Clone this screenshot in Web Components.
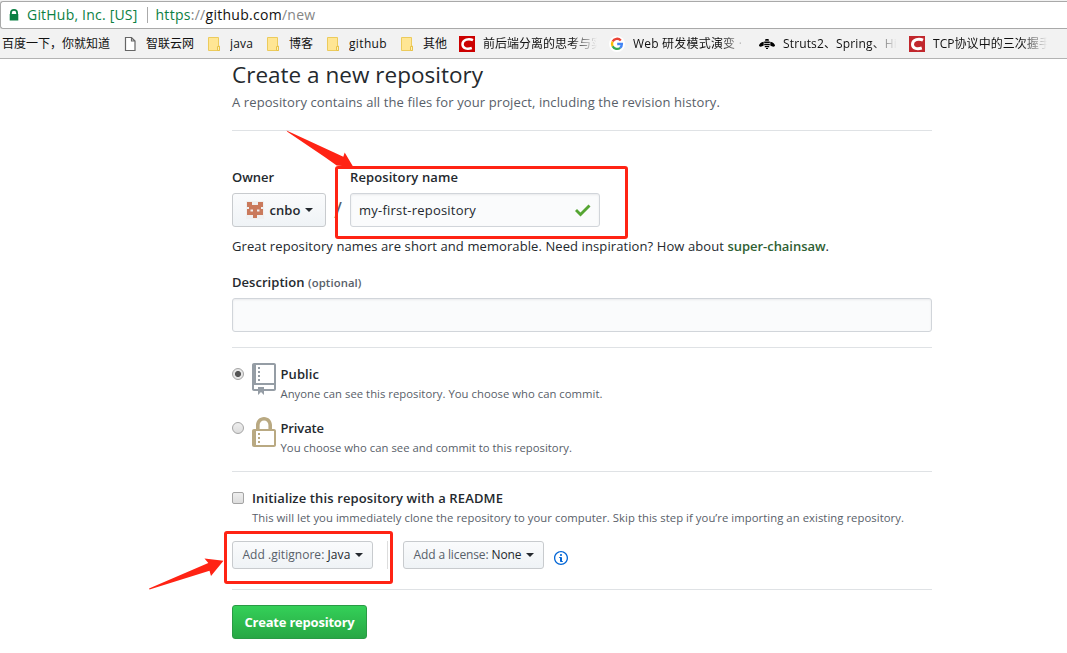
<!DOCTYPE html>
<html lang="en"><head><meta charset="utf-8"><title>Create a new repository</title>
<style>html,body{margin:0;background:#fff}body{width:1067px;height:653px;overflow:hidden}</style>
</head><body>
<repo-page></repo-page>
<script>
const define=(name,html,init)=>customElements.define(name,class extends HTMLElement{
  constructor(){super();const t=document.createElement('template');t.innerHTML=html;
    this.attachShadow({mode:'open'}).append(t.content.cloneNode(true));}
  connectedCallback(){if(init)init.call(this,this.shadowRoot);}
});

/* Text run whose tracking is tuned to the width in its "w" attribute. */
define('ui-text',`<style>:host{display:inline-block;white-space:pre;flex:none}span{display:inline-block}</style><span><slot></slot></span>`,
function(root){
  const w=parseFloat(this.getAttribute('w'));if(!w)return;
  const s=root.querySelector('span'),n=[...this.textContent].length;
  s.style.letterSpacing='0px';
  const d=(w-s.getBoundingClientRect().width)/n;
  s.style.letterSpacing=d.toFixed(3)+'px';
  this.style.width=w+'px';
});

define('address-bar',`<style>
:host{display:block;height:29px;padding-top:1px;background:#f2f2f2;box-sizing:border-box}
div{height:28px;box-sizing:border-box;border:1px solid #a9a9a9;border-right:0;border-radius:3px 0 0 3px;background:#fff;display:flex;align-items:center;padding-left:8px;font:14px/24px "Open Sans",sans-serif;color:#0b8043}
svg{margin-right:8px;flex:none}i{width:1px;height:16px;background:#aaa;margin:0 8px 0 9px}b{font-weight:400;color:#111}em{font-style:normal;color:#858585}
</style><div><svg width="10" height="12" viewBox="0 0 10 12"><path d="M1 5V4a4 4 0 0 1 8 0v1h.3v6.5H.7V5zm1.8 0h4.4V4a2.2 2.2 0 0 0-4.400 0z" fill="#0b8043"/></svg><ui-text w="110.5">GitHub, Inc. [US]</ui-text><i></i><ui-text w="160">https<em>://</em><b>github.com</b><em>/new</em></ui-text></div>`);

const icons={
 doc:'<path d="M3.5 1.5h6l3.500 3.500v9.500h-9.500zM9.500 1.500v3.500h3.500" fill="#fff" stroke="#666" stroke-width="1.2"/>',
 folder:'<path d="M2.500 1.500h10V10h1v4.500h-11z" fill="#ffe694" stroke="#eccb5c"/><path d="M11.500 14.500v-4h2v4z" fill="#fff0b5" stroke="#e7c24b"/>',
 c:'<path fill="#c00" d="M0 0h16v16H0z"/><path d="M14 4.200C10 2.200 3.600 3.300 3.500 8.300c0 4.500 5 5 9.300 3.700" fill="none" stroke="#fff" stroke-width="2.5"/>',
 c2:'<path fill="#c1272d" d="M0 0h16v16H0z"/><path d="M14 4.200C10 2.200 3.600 3.300 3.500 8.300c0 4.500 5 5 9.300 3.700" fill="none" stroke="#fff" stroke-width="3"/>',
 g:'<circle cx="8" cy="8" r="8" fill="#fff"/><g fill="none" stroke-width="2.300"><path d="M11.800 4.400A5 5 0 0 0 3.600 5.600" stroke="#ea4335"/><path d="M3.600 5.600a5 5 0 0 0 0 4.700" stroke="#fbbc05"/><path d="M3.600 10.300a5 5 0 0 0 7.600 1.500" stroke="#34a853"/><path d="M11.200 11.800A5 5 0 0 0 12.900 8H8.200" stroke="#4285f4"/></g>',
 bee:'<path d="M6.500 3h3l.5 1.700H6zM5.200 5.500h5.600v1.400H5.200zM5.200 7.800h5.600v1.400H5.200zM5.800 10h4.400v1.300H5.800zM7 12h2v1H7z"/><path d="M4.700 5.700C2 6 0 8 0 9.600c0 1.600 3 1.400 4.700 0zM11.300 5.700C14 6 16 8 16 9.600c0 1.600-3 1.400-4.700 0z"/>'
};
define('book-mark',`<style>
:host{display:flex;align-items:center;gap:8px;flex:none}svg{flex:none}
:host([fade]) div{-webkit-mask-image:linear-gradient(90deg,#000 calc(100% - 26px),transparent);mask-image:linear-gradient(90deg,#000 calc(100% - 26px),transparent)}
div{overflow:hidden;white-space:pre;padding-top:1px}
</style><svg width="16" height="16" viewBox="0 0 16 16"></svg><div><slot></slot></div>`,
function(root){const k=this.getAttribute('icon'),s=root.querySelector('svg');if(k)s.innerHTML=icons[k];else s.remove();
  const c=this.getAttribute('clip');if(c)root.querySelector('div').style.width=c+'px';});

define('bookmark-bar',`<style>
:host{display:flex;gap:12px;height:30px;box-sizing:border-box;border-bottom:1px solid #b3b3b3;background:#f2f2f2;padding-left:2px;font:12px/22px "Open Sans","Noto Sans CJK SC",sans-serif;color:#111;overflow:hidden}
</style>
<book-mark><ui-text w="108">百度一下，你就知道</ui-text></book-mark>
<book-mark icon="doc"><ui-text w="48">智联云网</ui-text></book-mark>
<book-mark icon="folder"><ui-text w="23">java</ui-text></book-mark>
<book-mark icon="folder"><ui-text w="24">博客</ui-text></book-mark>
<book-mark icon="folder"><ui-text w="38">github</ui-text></book-mark>
<book-mark icon="folder"><ui-text w="24">其他</ui-text></book-mark>
<book-mark icon="c" fade clip="114"><ui-text w="120">前后端分离的思考与实</ui-text></book-mark>
<book-mark icon="g" fade clip="114"><ui-text w="109">Web 研发模式演变 ·</ui-text></book-mark>
<book-mark icon="bee" fade clip="114"><ui-text w="114">Struts2、Spring、Hi</ui-text></book-mark>
<book-mark icon="c2" fade clip="114"><ui-text w="118">TCP协议中的三次握手</ui-text></book-mark>`);

define('drop-button',`<style>
:host{display:flex;box-sizing:border-box;align-items:center;justify-content:center;border:1px solid #c8cbce;border-radius:3px;background:linear-gradient(#fafbfc,#eff3f6);color:#24292e;flex:none}
i{border:4px solid transparent;border-top-color:#24292e;border-bottom:0;margin-left:4px}
</style><slot></slot><i></i>`);

define('form-input',`<style>
:host{display:flex;box-sizing:border-box;height:34px;align-items:center;justify-content:space-between;padding:0 8px;border:1px solid #d1d5da;border-radius:3px;background:#fafbfc;box-shadow:inset 0 1px 2px rgba(27,31,35,.075)}
</style><slot></slot>`);

define('radio-dot',`<style>
:host{display:block;box-sizing:border-box;width:12px;height:12px;border:1px solid #a4a4a4;border-radius:50%;background:linear-gradient(#eee,#ddd);flex:none}
:host([square]){border-radius:2px}
:host([checked]){background:radial-gradient(circle,#555 0 2.700px,#e6e6e6 3.300px)}
</style>`);

define('choice-row',`<style>
:host{display:flex;height:54px;align-items:flex-start}
radio-dot{margin:4px 8px 0 0}.ic{width:24px;height:32px;flex:none;margin:-1px 4.500px 0 0}
.t{display:flex;flex-direction:column}
</style><radio-dot></radio-dot><div class="ic"><slot name="icon"></slot></div><div class="t"><slot></slot></div>`,
function(root){if(this.hasAttribute('checked'))root.querySelector('radio-dot').setAttribute('checked','');});

define('red-arrows',`<style>:host{position:absolute;inset:0;pointer-events:none}</style>
<svg width="1067" height="653" viewBox="0 0 1067 653" fill="#ff2314"><path d="M286.500 130.500L343.300 156.700l1.400-4.200 8.600 14.500-16.600-1.500-12-8.500-37-25zM149 588.500l59.300-25.500-3.800-4.500 19 2.300-12.500 15.200-1.500-5.300-60 18.800z"/>
<g fill="none" stroke="#ff2314" stroke-width="3"><rect x="336.500" y="167.500" width="290" height="70" rx="1.500"/><rect x="225.500" y="532.500" width="166" height="50" rx="1.500"/></g></svg>`);

define('repo-form',`<style>
:host{display:block;width:700px;margin-left:232px;font:13px/20px "Open Sans",sans-serif;color:#24292e}
.row{display:flex}hr{border:0;height:1px;background:#dfe2e5;margin:0}
h1{font:400 22.5px/32px "Open Sans",sans-serif;margin:0;height:33px}
.s{font-weight:600}.m{color:#586069}.sm{font-size:11.300px}
.l{display:block;height:20px}
.slash{width:24px;text-align:center;line-height:34px;color:#586069;font-size:21px}
.go{width:135px;height:34px;box-sizing:border-box;border:1px solid #2a9a45;border-radius:3px;background:linear-gradient(#34d058,#28a745);color:#fff;display:flex;align-items:center;justify-content:center;margin-top:15px}
svg{display:block}
</style>
<h1><ui-text w="251">Create a new repository</ui-text></h1>
<ui-text class="m l" w="488">A repository contains all the files for your project, including the revision history.</ui-text>
<hr style="margin:18px 0 36px">
<div class="row"><ui-text class="s" w="42" style="margin-right:76px">Owner</ui-text><ui-text class="s" w="108">Repository name</ui-text></div>
<div class="row" style="margin-top:6px">
 <drop-button style="width:94px;height:34px"><svg width="18" height="18" viewBox="0 0 18 18" style="margin-right:6px"><path fill="#f0f0f0" d="M0 0h18v18H0z"/><path fill="#ca7a5c" fill-rule="evenodd" d="M1 1h5v3h6V1h5v5h-2v2h2v6h-6v3H7v-3H1V8h2V6H1zM4.500 8.500v2H7v-2zM11 8.500v2h2.500v-2z"/></svg><ui-text class="s" w="31">cnbo</ui-text></drop-button>
 <div class="slash">/</div>
 <form-input style="width:250px"><ui-text w="117">my-first-repository</ui-text><svg width="16" height="13" viewBox="0 0 16 13"><path d="M0 7l2-2 3.500 3.500L13.500.5l2 2-10 10z" fill="#55a532"/></svg></form-input>
</div>
<div style="margin-top:9px"><ui-text w="495.500">Great repository names are short and memorable. Need inspiration? How about </ui-text><ui-text class="s" style="color:#2f5f33" w="98">super-chainsaw</ui-text><ui-text>.</ui-text></div>
<div class="row" style="margin-top:16px;height:20px"><ui-text class="s" w="72.500">Description</ui-text><ui-text class="m sm" w="53.500" style="margin-left:3.500px;font-weight:600;padding-top:1px">(optional)</ui-text></div>
<form-input style="margin-top:6px"></form-input>
<hr style="margin:15px 0">
<choice-row checked style="margin-top:16px"><svg slot="icon" width="24" height="32" viewBox="0 0 12 16" fill="#959da5"><path d="M4 9H3V8h1v1zm0-3H3v1h1V6zm0-2H3v1h1V4zm0-2H3v1h1V2zm8-1v12c0 .55-.45 1-1 1H6v2l-1.500-1.500L3 16v-2H1c-.55 0-1-.45-1-1V1c0-.55.45-1 1-1h10c.55 0 1 .45 1 1zm-1 10H1v2h2v-1h3v1h5v-2zm0-10H2v9h9V1z"/></svg><ui-text class="s" w="38.500">Public</ui-text><ui-text class="m sm" w="322">Anyone can see this repository. You choose who can commit.</ui-text></choice-row>
<choice-row style="height:53px"><svg slot="icon" width="24" height="32" viewBox="0 0 12 16" fill="#b9a982"><path d="M4 13H3v-1h1v1zm8-6v7c0 .55-.45 1-1 1H1c-.55 0-1-.45-1-1V7c0-.55.45-1 1-1h1V4c0-2.200 1.800-4 4-4s4 1.800 4 4v2h1c.55 0 1 .45 1 1zM3.800 6h4.410V4c0-1.220-.98-2.200-2.200-2.200-1.220 0-2.200.98-2.200 2.200v2H3.800zM11 7H2v7h9V7zM4 8H3v1h1V8zm0 2H3v1h1v-1z"/></svg><ui-text class="s" w="43.500">Private</ui-text><ui-text class="m sm" w="291.500">You choose who can see and commit to this repository.</ui-text></choice-row>
<hr>
<div class="row" style="margin-top:16px"><radio-dot square style="margin:4px 8px 0 0"></radio-dot><ui-text class="s" w="251">Initialize this repository with a README</ui-text></div>
<ui-text class="m sm l" w="652" style="margin-left:20px">This will let you immediately clone the repository to your computer. Skip this step if you’re importing an existing repository.</ui-text>
<div class="row" style="height:28px;margin-top:13px;font-size:12px">
 <drop-button style="width:141px;height:28px"><ui-text class="m" w="85" style="font-weight:500">Add .gitignore: </ui-text><ui-text w="23" style="font-weight:500">Java</ui-text></drop-button>
 <div style="width:1px;background:#ddd;margin:0 15px 0 14px"></div>
 <drop-button style="width:141px;height:28px"><ui-text class="m" w="78" style="font-weight:500">Add a license: </ui-text><ui-text w="30" style="font-weight:500">None</ui-text></drop-button>
 <svg width="14" height="16" viewBox="0 0 14 16" fill="#0366d6" style="margin:9px 0 0 10px"><path d="M6.300 5.690a.942.942 0 0 1-.28-.7c0-.28.09-.52.28-.7.19-.18.42-.28.7-.28.28 0 .52.09.7.28.18.19.28.42.28.7 0 .28-.09.52-.28.7a1 1 0 0 1-.7.3c-.28 0-.52-.11-.7-.3zM8 7.990c-.02-.25-.11-.48-.31-.69-.2-.19-.42-.3-.69-.31H6c-.27.02-.48.13-.69.31-.2.2-.3.44-.31.69h1v3c.02.27.11.5.31.69.2.2.42.31.69.31h1c.27 0 .48-.11.69-.31.2-.19.3-.42.31-.69H8V7.980v.01zM7 2.300c-3.140 0-5.700 2.540-5.700 5.680 0 3.140 2.560 5.700 5.700 5.700s5.700-2.550 5.700-5.700c0-3.150-2.560-5.690-5.700-5.690v.01zM7 .98c3.860 0 7 3.140 7 7s-3.140 7-7 7-7-3.120-7-7 3.140-7 7-7z"/></svg>
</div>
<hr style="margin-top:20px">
<div class="go"><ui-text w="110" style="font-weight:700">Create repository</ui-text></div>`);

define('repo-page',`<style>:host{display:block;position:relative;width:1067px;height:653px;overflow:hidden;background:#fff}</style>
<address-bar></address-bar><bookmark-bar></bookmark-bar><repo-form></repo-form><red-arrows></red-arrows>`);
</script></body></html>
